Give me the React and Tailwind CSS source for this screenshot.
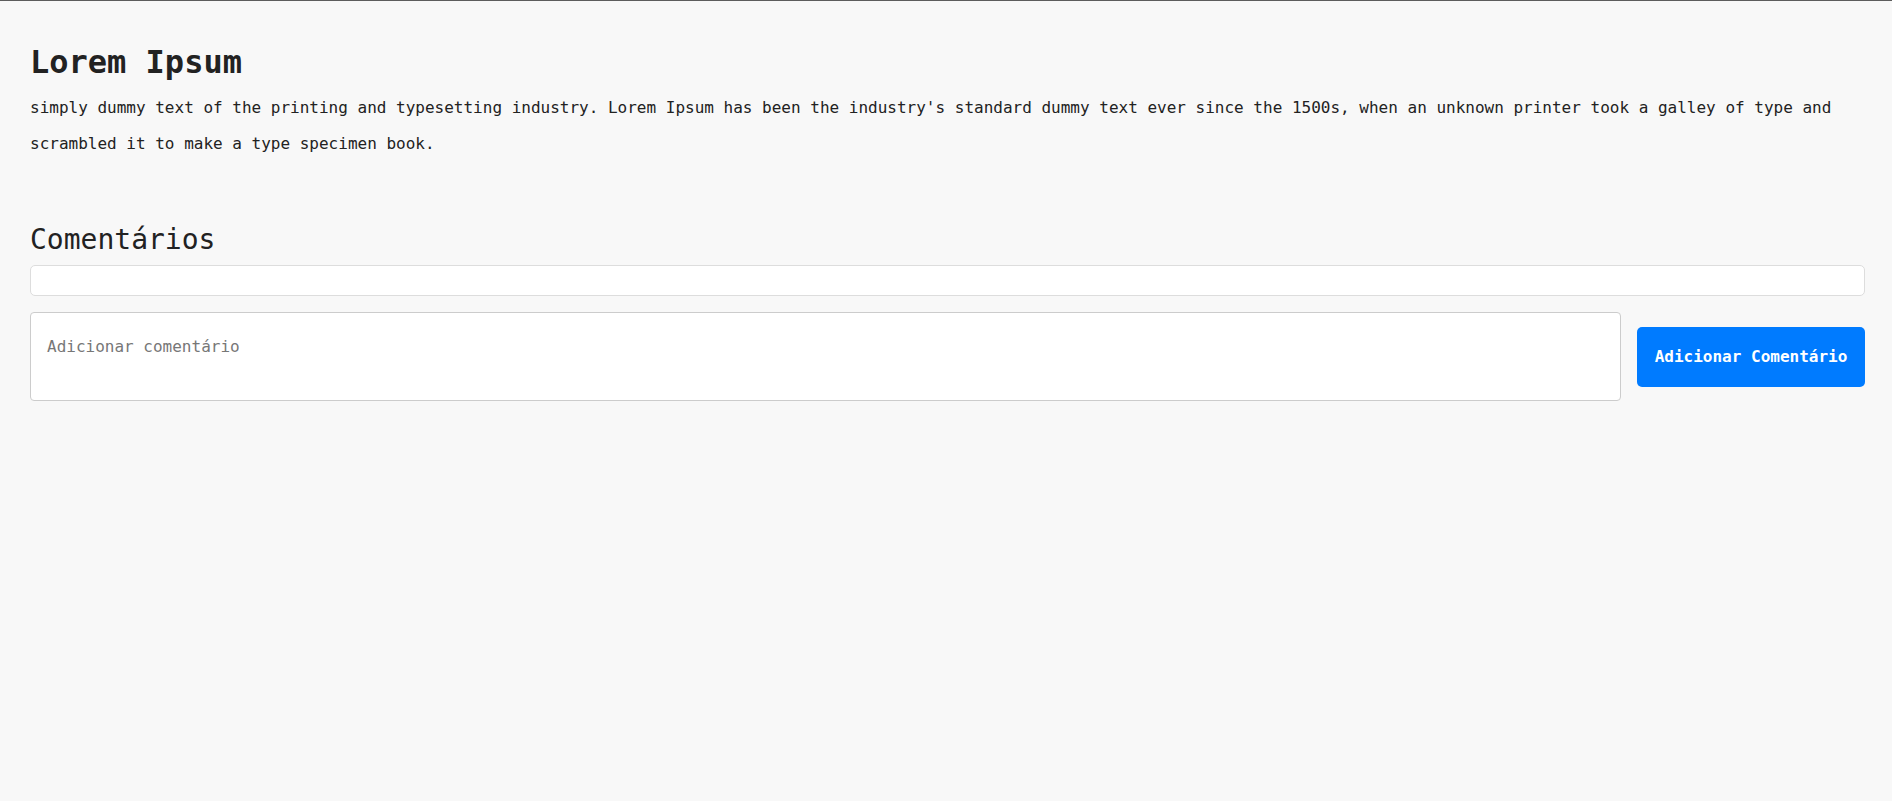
export default function App() {
  return (
    <div
      className="min-h-[801px] bg-[#f8f8f8] border-t border-[#5c5c5c] pl-[30px] pr-[27px] pt-[41px] text-[#222222]"
      style={{ fontFamily: '"DejaVu Sans Mono", "Liberation Mono", monospace' }}
    >
      <h1 className="text-[32px] leading-[40px] font-bold">Lorem Ipsum</h1>
      <p className="mt-[8px] text-[16px] leading-[36px]">
        simply dummy text of the printing and typesetting industry. Lorem Ipsum has been the
        industry's standard dummy text ever since the 1500s, when an unknown printer took a galley
        of type and scrambled it to make a type specimen book.
      </p>

      <h2 className="mt-[60px] text-[28px] leading-[36px]">Comentários</h2>
      <div className="mt-[7px] h-[31px] rounded-[5px] border border-[#dddddd] bg-white" />

      <div className="mt-[16px] flex items-center gap-4">
        <textarea
          className="h-[89px] flex-1 resize-none rounded-[4px] border border-[#cccccc] bg-white pl-4 pr-4 pt-[22px] text-[16px] leading-6 text-[#222222] outline-none placeholder:text-[#777777]"
          placeholder="Adicionar comentário"
        />
        <button className="h-[60px] w-[228px] shrink-0 rounded-[5px] bg-[#007bff] text-[16px] leading-6 font-bold text-white">
          Adicionar Comentário
        </button>
      </div>
    </div>
  );
}
